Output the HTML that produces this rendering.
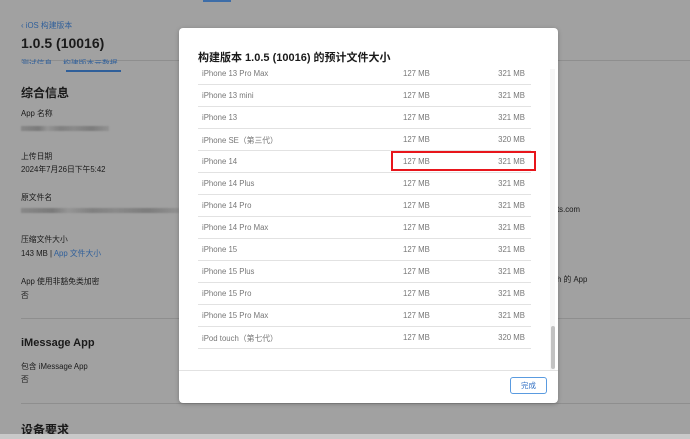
<!DOCTYPE html>
<html><head><meta charset="utf-8"><style>
*{margin:0;padding:0;box-sizing:border-box}
body{width:690px;height:439px;overflow:hidden;background:#a1a1a1;font-family:"Liberation Sans","Noto Sans CJK SC",sans-serif;position:relative;color:#1a1a1a}
.a{position:absolute;white-space:nowrap}
.hl{position:absolute;left:21px;height:1px;background:#8e8e8e}
.blur{position:absolute;height:5px;background:linear-gradient(90deg,#888 0,#7a7a7a 20%,#959595 30%,#808080 45%,#8a8a8a 60%,#7c7c7c 80%,#929292 100%);filter:blur(0.8px)}
#m{position:absolute;left:179px;top:28px;width:379px;height:375px;background:#fff;border-radius:4px;box-shadow:0 1px 4px rgba(0,0,0,.25)}
.row{position:absolute;left:19px;width:333px;height:22px;border-bottom:1px solid #e2e2e2;font-size:7.8px;color:#777}
.row span{position:absolute;top:6px}
.c1{left:4px}.c2{left:205px}.c3{right:6px}
.t{font-size:7.8px}
</style></head><body>
<div class="a" style="left:203px;top:0;width:28px;height:2px;background:#3d6da8"></div>
<div class="a t" style="left:21px;top:20px;color:#2f5f9a">‹ iOS 构建版本</div>
<div class="a" style="left:21px;top:35px;font-size:14px;font-weight:bold">1.0.5 (10016)</div>
<div class="hl" style="top:60px;width:669px"></div>
<div class="a t" style="left:21px;top:58px;color:#2f5f9a;height:6px;overflow:hidden">测试信息 &nbsp;&nbsp;&nbsp; 构建版本元数据</div>
<div class="a" style="left:66px;top:70px;width:55px;height:2px;background:#2f5f9a"></div>
<div class="a" style="left:21px;top:84px;font-size:12px;font-weight:bold">综合信息</div>
<div class="a t" style="left:21px;top:108px">App 名称</div>
<div class="blur" style="left:21px;top:126px;width:88px"></div>
<div class="a t" style="left:21px;top:151px">上传日期</div>
<div class="a t" style="left:21px;top:164px">2024年7月26日下午5:42</div>
<div class="a t" style="left:21px;top:192px">原文件名</div>
<div class="blur" style="left:21px;top:208px;width:158px"></div>
<div class="a t" style="left:21px;top:234px">压缩文件大小</div>
<div class="a t" style="left:21px;top:248px">143 MB | <span style="color:#2f5f9a">App 文件大小</span></div>
<div class="a t" style="left:21px;top:276px">App 使用非豁免类加密</div>
<div class="a t" style="left:21px;top:290px">否</div>
<div class="hl" style="top:318px;width:669px"></div>
<div class="a" style="left:21px;top:337px;font-size:11px;font-weight:bold">iMessage App</div>
<div class="a t" style="left:21px;top:361px">包含 iMessage App</div>
<div class="a t" style="left:21px;top:374px">否</div>
<div class="hl" style="top:403px;width:669px"></div>
<div class="a" style="left:21px;top:421px;font-size:12px;font-weight:bold">设备要求</div>
<div class="a" style="left:0;top:434px;width:690px;height:5px;background:#c9c9c9"></div>
<div class="a t" style="left:557px;top:205px">ts.com</div>
<div class="a t" style="left:557px;top:274px">h 的 App</div>
<div id="m">
<div class="a" style="left:19px;top:21px;font-size:11px;font-weight:bold;color:#1a1a1a">构建版本 1.0.5 (10016) 的预计文件大小</div>
<div class="row" style="top:35px"><span class="c1">iPhone 13 Pro Max</span><span class="c2">127 MB</span><span class="c3">321 MB</span></div>
<div class="row" style="top:57px"><span class="c1">iPhone 13 mini</span><span class="c2">127 MB</span><span class="c3">321 MB</span></div>
<div class="row" style="top:79px"><span class="c1">iPhone 13</span><span class="c2">127 MB</span><span class="c3">321 MB</span></div>
<div class="row" style="top:101px"><span class="c1">iPhone SE（第三代）</span><span class="c2">127 MB</span><span class="c3">320 MB</span></div>
<div class="row" style="top:123px"><span class="c1">iPhone 14</span><span class="c2">127 MB</span><span class="c3">321 MB</span></div>
<div class="row" style="top:145px"><span class="c1">iPhone 14 Plus</span><span class="c2">127 MB</span><span class="c3">321 MB</span></div>
<div class="row" style="top:167px"><span class="c1">iPhone 14 Pro</span><span class="c2">127 MB</span><span class="c3">321 MB</span></div>
<div class="row" style="top:189px"><span class="c1">iPhone 14 Pro Max</span><span class="c2">127 MB</span><span class="c3">321 MB</span></div>
<div class="row" style="top:211px"><span class="c1">iPhone 15</span><span class="c2">127 MB</span><span class="c3">321 MB</span></div>
<div class="row" style="top:233px"><span class="c1">iPhone 15 Plus</span><span class="c2">127 MB</span><span class="c3">321 MB</span></div>
<div class="row" style="top:255px"><span class="c1">iPhone 15 Pro</span><span class="c2">127 MB</span><span class="c3">321 MB</span></div>
<div class="row" style="top:277px"><span class="c1">iPhone 15 Pro Max</span><span class="c2">127 MB</span><span class="c3">321 MB</span></div>
<div class="row" style="top:299px"><span class="c1">iPod touch（第七代）</span><span class="c2">127 MB</span><span class="c3">320 MB</span></div>
<div class="a" style="left:212px;top:123px;width:145px;height:20px;border:2px solid #e8151b"></div>
<div class="a" style="left:371px;top:41px;width:5px;height:301px;background:#f6f6f6"></div>
<div class="a" style="left:372px;top:298px;width:4px;height:43px;background:#c2c2c2;border-radius:2px"></div>
<div class="a" style="left:0;top:342px;width:379px;height:1px;background:#e2e2e2"></div>
<div class="a" style="left:331px;top:349px;width:37px;height:17px;border:1px solid #5a9be0;border-radius:3px;font-size:7.5px;color:#2f6fc4;text-align:center;line-height:15px">完成</div>
</div>
</body></html>
